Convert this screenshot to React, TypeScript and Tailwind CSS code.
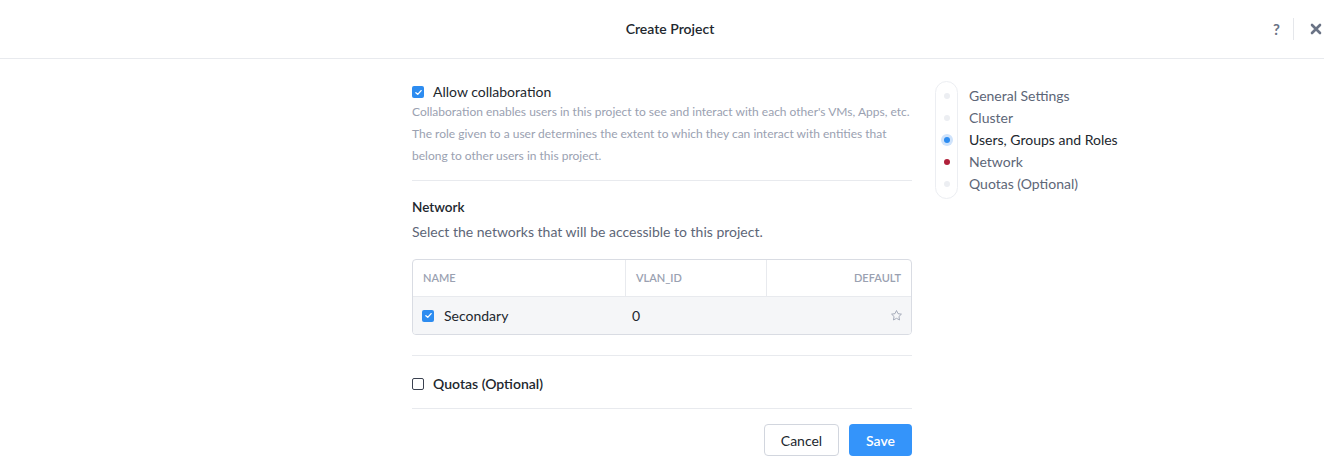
import React from 'react';

const font = { fontFamily: 'Lato, "Open Sans", sans-serif' };

const CheckBox: React.FC<{ checked?: boolean }> = ({ checked }) =>
  checked ? (
    <span className="flex h-[12px] w-[12px] items-center justify-center rounded-[2px] bg-[#2d8cf0]">
      <svg viewBox="0 0 12 12" className="h-[9px] w-[9px]" fill="none" stroke="white" strokeWidth="1.8">
        <path d="M2.5 6.2 5 8.5 9.5 3.5" strokeLinecap="round" strokeLinejoin="round" />
      </svg>
    </span>
  ) : (
    <span className="h-[12px] w-[12px] rounded-[2px] border border-[#3a4150] bg-white" />
  );

const steps = [
  { label: 'General Settings', dot: 'bg-[#eceef2]' },
  { label: 'Cluster', dot: 'bg-[#eceef2]' },
  { label: 'Users, Groups and Roles', dot: 'bg-[#2d8cf0] ring-[3px] ring-[#cfe3fb]', active: true },
  { label: 'Network', dot: 'bg-[#b0203a]' },
  { label: 'Quotas (Optional)', dot: 'bg-[#eceef2]' },
];

export default function App() {
  return (
    <div className="h-[470px] w-[1324px] bg-white text-[#22272e]" style={font}>
      <header className="relative flex h-[59px] items-center justify-center border-b border-[#e8eaee] pl-[16px]">
        <h1 className="-mt-[2px] text-[14px] font-semibold text-[#22272e]">Create Project</h1>
        <div className="absolute right-0 top-0 flex h-[58px] items-center">
          <span className="text-[15px] font-bold text-[#6a7385]">?</span>
          <span className="ml-[13px] h-[22px] w-px bg-[#e5e7eb]" />
          <svg viewBox="0 0 12 12" className="ml-[16px] mr-[2px] h-[12px] w-[12px]" stroke="#6a7385" strokeWidth="2.6" strokeLinecap="round">
            <path d="M2 2l8 8M10 2 2 10" />
          </svg>
        </div>
      </header>

      <div className="flex items-start pl-[412px] pt-[24px]">
        <main className="w-[500px]">
          <div className="border-b border-[#e8eaee] pb-[13px]">
            <label className="flex items-center gap-[9px] text-[14px] leading-[18px] text-[#22272e]">
              <CheckBox checked />
              Allow collaboration
            </label>
            <p className="text-[12px] leading-[22px] text-[#9aa1b1]">
              Collaboration enables users in this project to see and interact with each other's VMs, Apps, etc.
              <br />
              The role given to a user determines the extent to which they can interact with entities that
              <br />
              belong to other users in this project.
            </p>
          </div>

          <section className="border-b border-[#e8eaee] pb-[20px] pt-[16px]">
            <h2 className="text-[13.5px] font-semibold leading-[20px] text-[#22272e]">Network</h2>
            <p className="mt-[5px] text-[14px] leading-[20px] text-[#5d6677]">
              Select the networks that will be accessible to this project.
            </p>
            <div className="mt-[17px] overflow-hidden rounded-[4px] border border-[#d9dce3]">
              <div className="grid h-[37px] grid-cols-[212px_141px_1fr] border-b border-[#e8eaee] text-[11px] font-semibold text-[#9aa1b1]">
                <div className="flex items-center pl-[10px]">NAME</div>
                <div className="flex items-center border-l border-[#e8eaee] pl-[10px]">VLAN_ID</div>
                <div className="flex items-center justify-end border-l border-[#e8eaee] pr-[10px]">DEFAULT</div>
              </div>
              <div className="grid h-[37px] grid-cols-[212px_141px_1fr] bg-[#f5f6f8] text-[14px] text-[#22272e]">
                <div className="flex items-center gap-[10px] pl-[9px]">
                  <CheckBox checked />
                  Secondary
                </div>
                <div className="flex items-center pl-[7px]">0</div>
                <div className="flex items-center justify-end pr-[8px]">
                  <svg viewBox="0 0 24 24" className="h-[13px] w-[13px]" fill="none" stroke="#9aa1b1" strokeWidth="1.6" strokeLinejoin="round">
                    <path d="M12 2.8l2.8 5.8 6.3.9-4.6 4.4 1.1 6.3L12 17.2l-5.6 3 1.1-6.3-4.6-4.4 6.3-.9z" />
                  </svg>
                </div>
              </div>
            </div>
          </section>

          <div className="flex h-[53px] items-center gap-[9px] border-b border-[#e8eaee] pt-[3px] text-[14px] font-semibold text-[#22272e]">
            <CheckBox />
            Quotas (Optional)
          </div>

          <div className="flex justify-end gap-[10px] pt-[15px]">
            <button className="h-[32px] w-[75px] rounded-[4px] border border-[#d2d6de] bg-white text-[14px] text-[#22272e]">
              Cancel
            </button>
            <button className="h-[32px] w-[63px] rounded-[4px] bg-[#3494fa] text-[14px] font-semibold text-white">
              Save
            </button>
          </div>
        </main>

        <nav className="-mt-[2px] ml-[23px] flex items-start">
          <div className="w-[23px] rounded-full border border-[#eceef2] py-[3px]">
            {steps.map((s) => (
              <div key={s.label} className="flex h-[22px] items-center justify-center">
                <span className={'h-[6px] w-[6px] rounded-full ' + s.dot} />
              </div>
            ))}
          </div>
          <ul className="ml-[11px] py-[3px]">
            {steps.map((s) => (
              <li
                key={s.label}
                className={
                  'flex h-[22px] items-center text-[14px] ' + (s.active ? 'text-[#22272e]' : 'text-[#5d6677]')
                }
              >
                {s.label}
              </li>
            ))}
          </ul>
        </nav>
      </div>
    </div>
  );
}
